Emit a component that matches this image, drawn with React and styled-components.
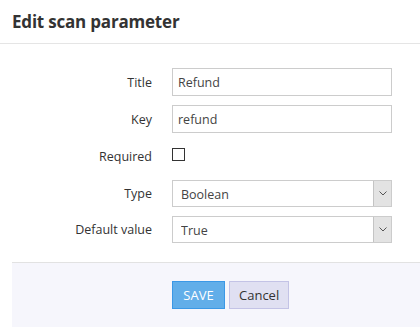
import React from "react";
import styled, { createGlobalStyle } from "styled-components";

const Global = createGlobalStyle`
  html, body { margin: 0; padding: 0; background: #fff; }
  body { font-family: "Open Sans", "Noto Sans", sans-serif; color: #333; overflow: hidden; }
  * { box-sizing: border-box; }
`;

const Modal = styled.div`
  width: 420px;
  height: 333px;
  background: #fff;
`;

const Header = styled.div`
  height: 44px;
  border-bottom: 1px solid #e5e5e5;
  padding: 0 12px;
  display: flex;
  align-items: center;
`;

const Heading = styled.h2`
  margin: 0;
  font-size: 17px;
  font-weight: 700;
  color: #333;
  letter-spacing: -0.2px;
`;

const Form = styled.div`
  padding: 24px 28px 19px 12px;
  display: flex;
  flex-direction: column;
  gap: 9px;
`;

const Row = styled.div`
  display: flex;
  align-items: center;
  height: ${(p) => p.$h || "28px"};
`;

const Label = styled.label`
  width: 160px;
  padding-right: 20px;
  text-align: right;
  font-size: 12.5px;
  color: #333;
  flex-shrink: 0;
`;

const Input = styled.input`
  width: 220px;
  height: 28px;
  border: 1px solid #ccc;
  padding: 0 5px;
  font-family: inherit;
  font-size: 12.5px;
  color: #444;
  outline: none;
`;

const Checkbox = styled.span`
  display: inline-block;
  width: 13px;
  height: 13px;
  border: 1.5px solid #333;
  margin-top: -5px;
`;

const SelectWrap = styled.div`
  position: relative;
  width: 220px;
  height: 27px;
`;

const Select = styled.select`
  appearance: none;
  width: 100%;
  height: 100%;
  border: 1px solid #ccc;
  padding: 2px 8px 0;
  font-family: inherit;
  font-size: 12.5px;
  color: #444;
  background: #fff;
  outline: none;
`;

const Arrow = styled.span`
  position: absolute;
  top: 1px;
  right: 1px;
  width: 18px;
  height: 25px;
  background: #e3e3e3;
  border-left: 1px solid #c4c4c4;
  display: flex;
  align-items: center;
  justify-content: center;
  pointer-events: none;
`;

const Footer = styled.div`
  margin-left: 12px;
  border-top: 1px solid #e2e2e2;
  background: #f6f6fc;
  height: 65px;
  display: flex;
  align-items: center;
  padding-left: 160px;
  gap: 4px;
`;

const Button = styled.button`
  height: 28px;
  padding: 0 9px;
  font-family: inherit;
  font-size: 13px;
  border: 1px solid ${(p) => (p.$primary ? "#3b98e6" : "#c3c3e6")};
  background: ${(p) => (p.$primary ? "#62aee9" : "#e0e0f2")};
  color: ${(p) => (p.$primary ? "#fff" : "#333")};
  cursor: pointer;
  min-width: ${(p) => (p.$primary ? "53px" : "60px")};
`;

const Chevron = () => (
  <svg width="8" height="5" viewBox="0 0 8 5">
    <path d="M0.5 0.5 L4 4 L7.5 0.5" fill="none" stroke="#555" strokeWidth="1" />
  </svg>
);

export default function App() {
  return (
    <>
      <Global />
      <Modal>
        <Header>
          <Heading>Edit scan parameter</Heading>
        </Header>
        <Form>
          <Row>
            <Label>Title</Label>
            <Input defaultValue="Refund" />
          </Row>
          <Row>
            <Label>Key</Label>
            <Input defaultValue="refund" />
          </Row>
          <Row $h="29px">
            <Label>Required</Label>
            <Checkbox />
          </Row>
          <Row $h="27px">
            <Label>Type</Label>
            <SelectWrap>
              <Select defaultValue="Boolean">
                <option>Boolean</option>
              </Select>
              <Arrow><Chevron /></Arrow>
            </SelectWrap>
          </Row>
          <Row $h="27px">
            <Label>Default value</Label>
            <SelectWrap>
              <Select defaultValue="True">
                <option>True</option>
              </Select>
              <Arrow><Chevron /></Arrow>
            </SelectWrap>
          </Row>
        </Form>
        <Footer>
          <Button $primary>SAVE</Button>
          <Button>Cancel</Button>
        </Footer>
      </Modal>
    </>
  );
}
